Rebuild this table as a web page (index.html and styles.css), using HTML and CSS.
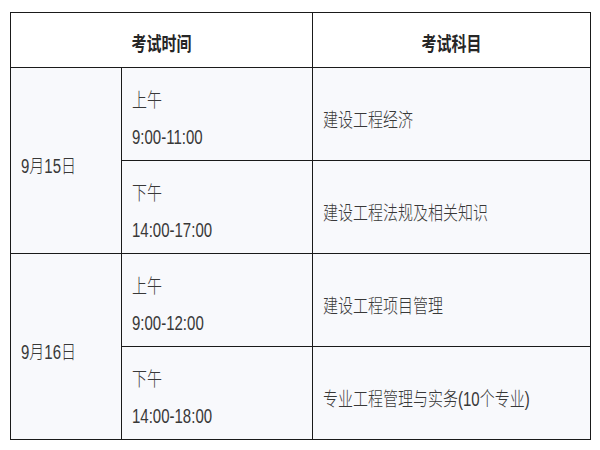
FILE: index.html
```html
<!DOCTYPE html>
<html lang="zh">
<head>
<meta charset="utf-8">
<link rel="stylesheet" href="styles.css">
</head>
<body>
<table class="schedule">
  <colgroup>
    <col class="c-date">
    <col class="c-time">
    <col class="c-subj">
  </colgroup>
  <tr class="head">
    <th colspan="2"><span class="t">考试时间</span></th>
    <th><span class="t">考试科目</span></th>
  </tr>
  <tr class="row">
    <td rowspan="2" class="date"><span class="t">9月15日</span></td>
    <td class="time"><div class="ln"><span class="t">上午</span></div><div class="ln"><span class="t">9:00-11:00</span></div></td>
    <td class="subj"><span class="t">建设工程经济</span></td>
  </tr>
  <tr class="row">
    <td class="time"><div class="ln"><span class="t">下午</span></div><div class="ln"><span class="t">14:00-17:00</span></div></td>
    <td class="subj"><span class="t">建设工程法规及相关知识</span></td>
  </tr>
  <tr class="row">
    <td rowspan="2" class="date"><span class="t">9月16日</span></td>
    <td class="time"><div class="ln"><span class="t">上午</span></div><div class="ln"><span class="t">9:00-12:00</span></div></td>
    <td class="subj"><span class="t">建设工程项目管理</span></td>
  </tr>
  <tr class="row">
    <td class="time"><div class="ln"><span class="t">下午</span></div><div class="ln"><span class="t">14:00-18:00</span></div></td>
    <td class="subj"><span class="t">专业工程管理与实务(10个专业)</span></td>
  </tr>
</table>
</body>
</html>
```
FILE: styles.css
```css
html, body {
  margin: 0;
  padding: 0;
  background: #ffffff;
}
body {
  padding: 12px 0 0 10px;
  font-family: "Liberation Sans Narrow", "Liberation Sans", "Noto Sans CJK SC", sans-serif;
  font-size: 15px;
  font-weight: 300;
  color: #383838;
}
.schedule {
  border-collapse: collapse;
  width: 580px;
  table-layout: fixed;
}
.c-date { width: 111px; }
.c-time { width: 191px; }
.c-subj { width: 278px; }
.schedule th,
.schedule td {
  border: 1px solid #1a1a1a;
  padding: 0 10px;
  text-align: left;
  vertical-align: middle;
}
.t {
  display: inline-block;
  transform: scaleY(1.32);
}
.head th {
  height: 50px;
  padding-top: 4px;
  background: #ffffff;
  text-align: center;
  font-weight: bold;
  color: #262626;
}
.row td {
  height: 84px;
  padding-top: 8px;
  background: #f8f9fc;
}
.time .ln {
  line-height: 22px;
}
.time .ln + .ln {
  margin-top: 15px;
}
```
